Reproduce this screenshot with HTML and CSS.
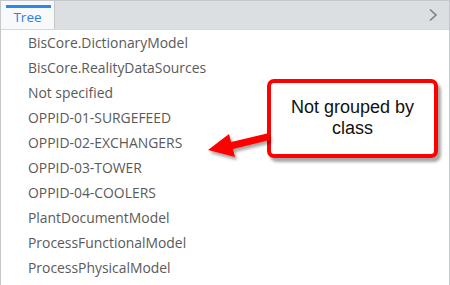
FILE: index.html
```html
<!DOCTYPE html>
<html lang="en">
<head>
  <meta charset="UTF-8">
  <title>Tree</title>
  <link rel="stylesheet" href="styles.css">
</head>
<body>
  <div class="panel">
    <div class="tabbar">
      <div class="tab">Tree</div>
      <div class="tab-fill"></div>
      <svg class="chevron" width="10" height="14" viewBox="0 0 10 14"><path d="M2 1.5 L8 7 L2 12.5" fill="none" stroke="#7a7f86" stroke-width="1.6"/></svg>
    </div>
    <ul class="tree">
      <li>BisCore.DictionaryModel</li>
      <li>BisCore.RealityDataSources</li>
      <li>Not specified</li>
      <li>OPPID-01-SURGEFEED</li>
      <li>OPPID-02-EXCHANGERS</li>
      <li>OPPID-03-TOWER</li>
      <li>OPPID-04-COOLERS</li>
      <li>PlantDocumentModel</li>
      <li>ProcessFunctionalModel</li>
      <li>ProcessPhysicalModel</li>
    </ul>
    <div class="callout">Not grouped by<br>class</div>
    <svg class="arrow" width="80" height="40" viewBox="0 0 80 40">
      <defs>
        <filter id="sh" x="-20%" y="-20%" width="150%" height="160%">
          <feDropShadow dx="2" dy="3" stdDeviation="1.5" flood-color="#000" flood-opacity="0.35"/>
        </filter>
      </defs>
      <g filter="url(#sh)" fill="#ff0000">
        <polygon points="62,4 63,11 22,21 20,14"/>
        <polygon points="1,21 22,5 28,28"/>
      </g>
    </svg>
  </div>
</body>
</html>
```

FILE: styles.css
```css
body { margin: 0; font-family: "Open Sans", sans-serif; background: #fff; }
.panel { position: relative; width: 448px; height: 285px; border-left: 1px solid #c4c7cb; border-right: 1px solid #c4c7cb; }
.tabbar { display: flex; height: 28px; border-top: 1px solid #c4c7cb; border-bottom: 1px solid #d6d9dc; background: #dcdfe2; align-items: stretch; }
.tab { width: 54px; box-sizing: border-box; background: #f7f9fa; border-right: 1px solid #c4c7cb; color: #2d7fdb; font-size: 13.5px; text-align: center; padding-top: 7px; position: relative; }
.tab::before { content: ""; position: absolute; left: 5px; right: 3px; top: 4px; height: 3px; background: #2a8ae8; }
.tab-fill { flex: 1; }
.chevron { align-self: center; margin-right: 11px; }
.tree { list-style: none; margin: 0; padding: 0 0 0 27px; }
.tree li { height: 25px; line-height: 25px; font-size: 13.9px; color: #5a5a5a; }
.callout { position: absolute; left: 266px; top: 79px; width: 171px; height: 79px; box-sizing: border-box; border: 4px solid #ff0000; border-radius: 7px; background: #fff; box-shadow: 3px 4px 3px rgba(0,0,0,0.35); font-family: "Liberation Sans", Arial, sans-serif; font-size: 18px; line-height: 21px; text-align: center; padding-top: 14px; color: #111; }
.arrow { position: absolute; left: 206px; top: 129px; }
```
